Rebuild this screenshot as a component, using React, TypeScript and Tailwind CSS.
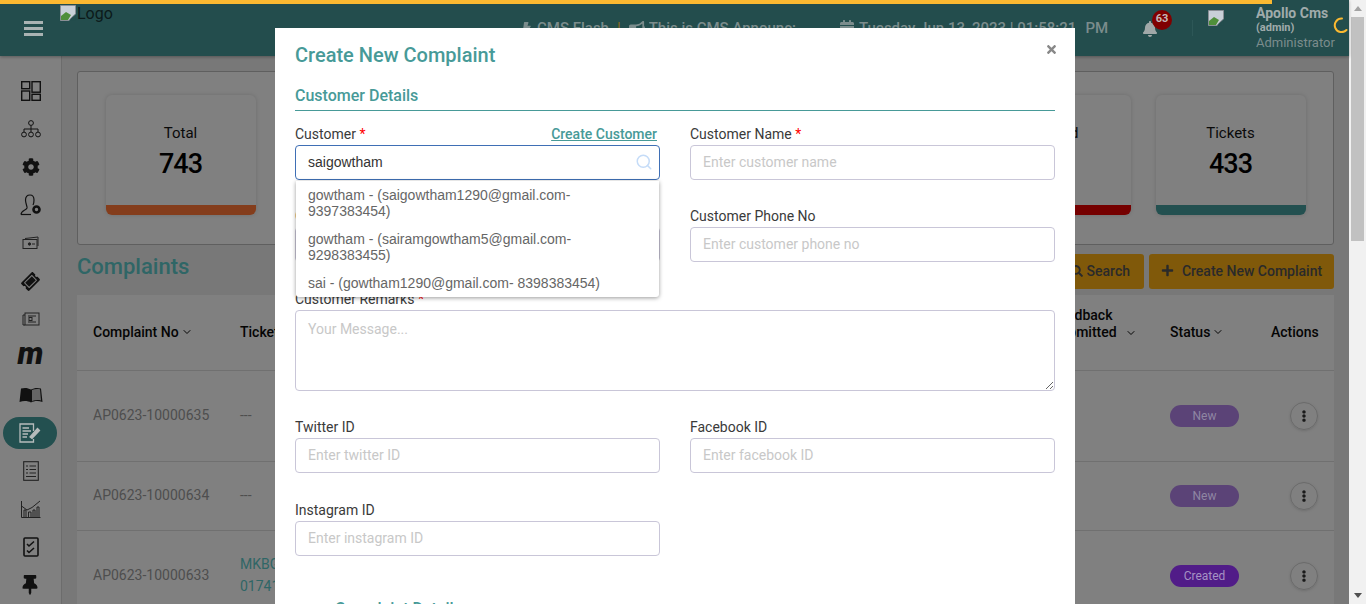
import React from 'react';
import { FaBell, FaBullhorn, FaCalendarAlt, FaBolt, FaCog, FaThumbtack, FaTicketAlt, FaSearch, FaPlus, FaTimes, FaEllipsisV } from 'react-icons/fa';
import { ChevronDown, Search } from 'lucide-react';

const FONT = "font-['Roboto',sans-serif]";

const BrokenImage: React.FC = () => (
  <svg viewBox="0 0 16 16" className="h-4 w-4 shrink-0">
    <path d="M0.5 0.5H15.5V9L11 13L9 15.5H0.5Z" fill="#c9d0d8" stroke="#8a8f96" />
    <path d="M1 11L6 7L11 10L8 15H1Z" fill="#4f8f3a" />
    <path d="M10 15L15.5 10V15.5H10Z" fill="#234d4d" />
  </svg>
);

const i = { fill: 'none', stroke: '#111', strokeWidth: 1.4 };

const SIDE_ICONS: React.ReactNode[] = [
  <svg viewBox="0 0 20 20" className="h-5 w-5" {...i}><rect x="0.7" y="0.7" width="8" height="7" /><rect x="11" y="0.7" width="8.3" height="10.5" /><rect x="0.7" y="10" width="8" height="9.3" /><rect x="11" y="13.3" width="8.3" height="6" /></svg>,
  <svg viewBox="0 0 20 18" className="h-[18px] w-5" fill="none" stroke="#111" strokeWidth="1"><circle cx="10" cy="3" r="2.4" /><path d="M10 5.5V12M3 12V9H17V12" /><circle cx="3" cy="14.5" r="2.4" /><circle cx="10" cy="14.5" r="2.4" /><circle cx="17" cy="14.5" r="2.4" /></svg>,
  <FaCog className="h-[18px] w-[18px] text-[#111]" />,
  <svg viewBox="0 0 22 22" className="h-[22px] w-[22px]" fill="none" stroke="#111" strokeWidth="1.2"><path d="M1 20.5C1 16.5 6 16.5 7 14C7.5 12.5 5.5 10 5.5 6C5.5 2.5 7.5 1 10 1C12.5 1 14 3 14 6C14 8 13.5 10 13 11" /><path d="M1 20.5H11" /><circle cx="16.5" cy="15.5" r="3" strokeWidth="2.6" /></svg>,
  <svg viewBox="0 0 18 14" className="h-[14px] w-[18px]" fill="none" stroke="#222" strokeWidth="1"><path d="M3 2.5L16 1V10" /><rect x="1" y="3.5" width="14" height="9" /><circle cx="7.5" cy="8" r="1.2" fill="#222" /><path d="M10 8H13" /></svg>,
  <FaTicketAlt className="h-[17px] w-[17px] -rotate-45 text-[#111]" />,
  <svg viewBox="0 0 18 14" className="h-[14px] w-[18px]" fill="none" stroke="#222" strokeWidth="1"><path d="M3 3H1V13H3" /><rect x="3" y="1" width="14" height="12" /><path d="M6 4H14M6 10H14" /><rect x="7" y="5.5" width="3" height="3" /></svg>,
  <span className="-mt-2 text-[31px] font-black italic leading-none text-[#111]">m</span>,
  <svg viewBox="0 0 24 16" className="h-4 w-6"><path d="M2 1.5C6 0.5 9 1 12 2.5C15 1 18 0.5 22 1.5L23.5 15C19 13.5 15 14 12 15.5C9 14 5 13.5 0.5 15Z" fill="#111" /><path d="M13 3C15.5 2 18 1.7 21 2.3L22 13.5C19 12.8 16 13 13 14Z" fill="#666" /></svg>,
  <svg viewBox="0 0 22 20" className="h-5 w-[22px]" fill="none" stroke="#b6bcbc" strokeWidth="1.3"><path d="M14.5 8V1H1V19H14.5V16" /><path d="M3.5 5H10M3.5 8H12M3.5 11H9M3.5 14H8" /><path d="M11 14L18.5 5.5L20.5 7.5L13 15.5Z" fill="#b6bcbc" /></svg>,
  <svg viewBox="0 0 16 20" className="h-5 w-4" fill="none" stroke="#222" strokeWidth="1.1"><rect x="0.7" y="0.7" width="14.6" height="18.6" /><path d="M3 5H5M6.5 5H13M3 8.5H5M6.5 8.5H13M3 12H5M6.5 12H13M3 15.5H13" /></svg>,
  <svg viewBox="0 0 20 18" className="h-[18px] w-5" fill="none" stroke="#222" strokeWidth="1"><path d="M0.5 17.5H19.5M0.5 1V17.5" /><path d="M0.5 6L6 10L11 7.5L19 1" /><path d="M3 17V10H5V17M7.5 17V12H10V17M12 17V10H14V17M16 17V7H18V17" /></svg>,
  <svg viewBox="0 0 16 20" className="h-5 w-4" fill="none" stroke="#111" strokeWidth="1.6"><rect x="1" y="1" width="14" height="18" rx="1" /><path d="M4 7L6 9L11 4.5M4 13.5L6 15.5L11 11" /></svg>,
  <FaThumbtack className="-ml-0.5 h-5 w-5 text-[#111]" />,
];

const Sidebar: React.FC = () => (
  <aside className="flex w-[62px] shrink-0 flex-col border-r border-[#6c6c6c] bg-[#808080] pt-4">
    {SIDE_ICONS.map((icon, n) => (
      <div key={n} className="flex h-[38px] shrink-0 items-center justify-center">
        <div className={n === 9 ? 'ml-[3px] mr-1 flex h-8 w-[54px] items-center justify-center rounded-full bg-[#235050]' : 'flex h-8 w-[54px] items-center justify-center'}>
          {icon}
        </div>
      </div>
    ))}
  </aside>
);

const STATS = [
  { label: 'Total', value: '743', bar: 'bg-[#843d1c]' },
  { label: 'Open', value: '120', bar: 'bg-[#7a5a10]' },
  { label: 'Pending', value: '64', bar: 'bg-[#1f4f7a]' },
  { label: 'Assigned', value: '50', bar: 'bg-[#511c88]' },
  { label: 'Resolved', value: '46', bar: 'bg-[#1f6a3a]' },
  { label: 'Closed', value: '30', bar: 'bg-[#750000]' },
  { label: 'Tickets', value: '433', bar: 'bg-[#235050]' },
];

const Stats: React.FC = () => (
  <section className="flex h-[174px] justify-center gap-[25px] rounded-[3px] border border-[#5f5f5f] bg-[#808080] pt-[23px]">
    {STATS.map((s) => (
      <div key={s.label} className="flex h-[120px] w-[150px] flex-col overflow-hidden rounded-md bg-[#808080] shadow-[0_0_4px_rgba(0,0,0,0.15)]">
        <div className="flex-1 pt-[28px] text-center text-[#0a0a0a]">
          <div className="text-[15px] leading-5">{s.label}</div>
          <div className="mt-[4px] text-[27px] font-medium leading-[34px] tracking-[-1px] text-black">{s.value}</div>
        </div>
        <div className={`h-[10px] ${s.bar}`} />
      </div>
    ))}
  </section>
);

const ROW = 'grid grid-cols-[147px_1fr_120px_101px_63px] items-center pl-4';

const RowActions: React.FC = () => (
  <div className="ml-[19px] flex h-7 w-7 items-center justify-center rounded-full border border-[#6a6a6a] text-[#1a1a1a] shadow-sm">
    <FaEllipsisV className="h-3 w-3" />
  </div>
);

const RowData = [
  { no: 'AP0623-10000635', ticket: ['---'], status: 'New', h: 'h-[91px]', pill: 'bg-[#5b4377] text-[#8f86a3]' },
  { no: 'AP0623-10000634', ticket: ['---'], status: 'New', h: 'h-[69px]', pill: 'bg-[#5b4377] text-[#8f86a3]' },
  { no: 'AP0623-10000633', ticket: ['MKBG', '01741'], status: 'Created', h: 'h-[90px]', pill: 'bg-[#511c88] text-[#a692c4]' },
];

const Table: React.FC = () => (
  <div className="mt-[6px] bg-[#808080] text-sm">
    <div className={`${ROW} h-[76px] border-b border-[#707070] pb-[2px] font-medium text-[#050505]`}>
      <div className="flex items-center gap-0.5">Complaint No <ChevronDown className="h-3 w-3" /></div>
      <div>Ticket</div>
      <div className="ml-[2px] flex items-end gap-2 pb-[15px] leading-[17px]">
        <span>Feedback<br />Submitted</span>
        <ChevronDown className="mb-0.5 h-3 w-3" />
      </div>
      <div className="flex items-center gap-0.5">Status <ChevronDown className="h-3 w-3" /></div>
      <div>Actions</div>
    </div>
    {RowData.map((r) => (
      <div key={r.no} className={`${ROW} ${r.h} border-b border-[#707070] text-[#4e4e4e]`}>
        <div className="pb-[2px]">{r.no}</div>
        <div className={r.ticket.length > 1 ? 'pb-[2px] leading-[22px] text-[#2f6666]' : 'pb-[2px]'}>
          {r.ticket.map((t) => <div key={t}>{t}</div>)}
        </div>
        <div />
        <div><span className={`flex h-[22px] w-[69px] items-center justify-center rounded-full text-xs ${r.pill}`}>{r.status}</span></div>
        <RowActions />
      </div>
    ))}
  </div>
);

const Header: React.FC = () => (
  <header className="relative flex h-14 shrink-0 items-center bg-[#234d4d] text-[#7b8c8c] shadow-[0_1px_3px_rgba(0,0,0,0.3)]">
    <div className="absolute left-0 top-0 h-1 w-[1272px] bg-[#fbb931]" />
    <div className="flex w-[521px] shrink-0 items-center self-stretch pl-6">
      <div className="flex w-[19px] flex-col gap-[3px]">
        <span className="h-[3px] bg-[#a9b3b3]" /><span className="h-[3px] bg-[#a9b3b3]" /><span className="h-[3px] bg-[#a9b3b3]" />
      </div>
      <div className="ml-[17px] flex items-start self-start pt-[5px] text-base leading-[18px] text-[#0c1a1a]"><BrokenImage /><span className="ml-px">Logo</span></div>
    </div>
    <div className="flex w-[318px] shrink-0 items-center text-[15px] font-medium whitespace-nowrap">
      <FaBolt className="mr-1 h-3 w-3" />CMS Flash
      <span className="mx-[8px] text-[#8a6a20]">|</span>
      <FaBullhorn className="mr-1 h-4 w-4" />
      <span className="w-[150px] overflow-hidden">This is CMS Announc:</span>
    </div>
    <div className="flex w-[296px] shrink-0 items-center text-[15px] font-medium whitespace-nowrap">
      <FaCalendarAlt className="mr-1 h-4 w-4" />Tuesday Jun 13, 2023 | 01:58:21<span className="ml-[9px]">PM</span>
    </div>
    <div className="relative flex w-[57px] shrink-0 items-center pl-[7px] pt-px">
      <FaBell className="h-4 w-4 text-[#a0a8a8]" />
      <span className="absolute -top-[10px] left-[17px] flex h-5 w-5 items-center justify-center rounded-full bg-[#800000] text-[11px] font-bold text-[#c4b8b8]">63</span>
    </div>
    <div className="h-4 border-l border-[#2d5757]" />
    <div className="ml-[15px] -mt-[20px]"><BrokenImage /></div>
    <div className="ml-[32px] w-[77px] whitespace-nowrap">
      <div className="text-sm font-bold leading-[14px] text-[#a0abab]">Apollo Cms</div>
      <div className="text-[11px] font-bold leading-[15px] text-[#a0abab]">(admin)</div>
      <div className="text-[13px] leading-[15px]">Administrator</div>
    </div>
    <svg viewBox="0 0 16 16" className="-mt-[6px] h-4 w-4" fill="none" stroke="#fbb931" strokeWidth="2" strokeLinecap="round"><path d="M9 1.5A6.8 6.8 0 1 0 13.5 13" /></svg>
  </header>
);

const inputBase = 'h-[35px] w-full rounded-[4px] border border-[#c9c6d8] bg-white px-3 pb-[2px] text-sm text-[#333] placeholder:text-[#c8c8c8] outline-none';

const Field: React.FC<{ label: string; placeholder: string; required?: boolean; className?: string }> = ({ label, placeholder, required, className }) => (
  <div className={className}>
    <label className="block h-[21px] text-sm leading-[21px] text-[#3a3a3a]">{label}{required && <span className="text-[#f00]"> *</span>}</label>
    <input className={inputBase} placeholder={placeholder} readOnly />
  </div>
);

const OPTIONS = [
  'gowtham - (saigowtham1290@gmail.com- 9397383454)',
  'gowtham - (sairamgowtham5@gmail.com- 9298383455)',
  'sai - (gowtham1290@gmail.com- 8398383454)',
];

const CustomerSearch: React.FC = () => (
  <div className="relative">
    <div className="flex h-[21px] items-start justify-between pr-[3px] text-sm leading-[21px]">
      <label className="text-[#3a3a3a]">Customer <span className="text-[#f00]">*</span></label>
      <a className="font-medium text-[#479a98] underline">Create Customer</a>
    </div>
    <div className="flex h-[35px] items-center justify-between rounded-[4px] border border-[#3f6fb5] bg-white pb-[2px] pl-3 pr-[6px] font-['Liberation_Sans',sans-serif] text-sm text-[#333]">
      saigowtham
      <Search className="h-[18px] w-[18px] text-[#c5dcf8]" />
    </div>
    <ul className="absolute left-px right-px top-[57px] z-10 rounded-b-[3px] bg-white font-['Liberation_Sans',sans-serif] text-sm leading-4 text-[#666] shadow-[0_1px_4px_rgba(0,0,0,0.4)]">
      {OPTIONS.map((o) => <li key={o} className="px-3 py-[6px]">{o}</li>)}
    </ul>
  </div>
);

const Modal: React.FC = () => (
  <div className="absolute left-[275px] top-7 z-20 h-[640px] w-[800px] bg-white px-5 pt-[13px]">
    <FaTimes className="absolute right-[17px] top-[15px] h-[13px] w-[13px] text-[#888]" />
    <h2 className="text-[20px] font-medium leading-[28px] text-[#479a98]">Create New Complaint</h2>
    <h3 className="mt-4 border-b border-[#479a98] pb-[4px] text-base font-medium leading-[21px] text-[#479a98]">Customer Details</h3>
    <div className="mt-[13px] grid grid-cols-2 gap-x-[30px] gap-y-[26px]">
      <CustomerSearch />
      <Field label="Customer Name" placeholder="Enter customer name" required />
      <Field label="Customer Email" placeholder="Enter customer email" required />
      <Field label="Customer Phone No" placeholder="Enter customer phone no" />
      <div className="col-span-2 mt-px">
        <label className="block h-[21px] text-sm leading-[21px] text-[#3a3a3a]">Customer Remarks <span className="text-[#f00]">*</span></label>
        <textarea className="block h-[81px] w-full rounded-[4px] border border-[#c9c6d8] px-3 py-2 text-sm placeholder:text-[#c8c8c8] outline-none" placeholder="Your Message..." readOnly />
      </div>
      <Field label="Twitter ID" placeholder="Enter twitter ID" />
      <Field label="Facebook ID" placeholder="Enter facebook ID" />
      <Field className="mt-px" label="Instagram ID" placeholder="Enter instagram ID" />
    </div>
    <h3 className="ml-10 mt-[41px] text-base font-medium text-[#479a98]">Complaint Details</h3>
  </div>
);

const Scrollbar: React.FC = () => (
  <div className="flex w-[17px] shrink-0 flex-col items-center bg-[#f1f1f1]">
    <div className="mt-[6px] h-0 w-0 border-x-4 border-b-[5px] border-x-transparent border-b-[#a3a3a3]" />
    <div className="mt-[6px] h-[224px] w-[13px] bg-[#c1c1c1]" />
    <div className="mb-[6px] mt-auto h-0 w-0 border-x-4 border-t-[5px] border-x-transparent border-t-[#505050]" />
  </div>
);

export default function App() {
  return (
    <div className={`${FONT} flex h-[604px] overflow-hidden`}>
      <div className="relative flex w-[1349px] shrink-0 flex-col">
        <Header />
        <div className="flex min-h-0 flex-1">
          <Sidebar />
          <main className="flex-1 bg-[#787878] pl-[15px] pr-[15px] pt-[15px]">
            <Stats />
            <div className="mt-[9px] flex items-center justify-between">
              <h1 className="-mt-[10px] text-[22px] font-medium text-[#2f6666]">Complaints</h1>
              <div className="flex gap-[5px] text-sm font-medium text-[#2a2a2a]">
                <button className="flex h-[35px] w-[90px] items-center justify-end gap-1 rounded-[3px] bg-[#80590a] pb-[2px] pr-[14px]"><FaSearch className="h-3 w-3" />Search</button>
                <button className="flex h-[35px] w-[185px] items-center justify-center gap-2 rounded-[3px] bg-[#80590a] pb-[2px]"><FaPlus className="h-[13px] w-[13px]" />Create New Complaint</button>
              </div>
            </div>
            <Table />
          </main>
        </div>
        <Modal />
      </div>
      <Scrollbar />
    </div>
  );
}
